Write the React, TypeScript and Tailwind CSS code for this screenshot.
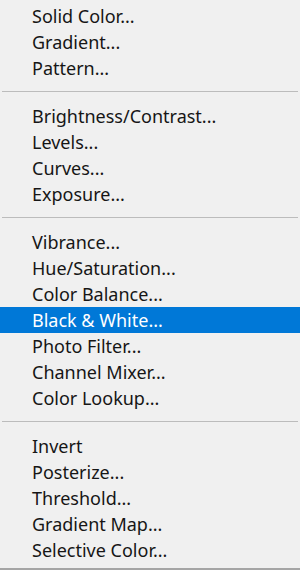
import React from "react";

const groups: string[][] = [
  ["Solid Color...", "Gradient...", "Pattern..."],
  ["Brightness/Contrast...", "Levels...", "Curves...", "Exposure..."],
  ["Vibrance...", "Hue/Saturation...", "Color Balance...", "Black & White...", "Photo Filter...", "Channel Mixer...", "Color Lookup..."],
  ["Invert", "Posterize...", "Threshold...", "Gradient Map...", "Selective Color..."],
];

export default function App() {
  return (
    <div
      className="w-[300px] h-[570px] bg-[#f0f0f0] flex flex-col pt-[3px] border-b-2 border-[#a5a5a5] overflow-hidden"
      style={{ fontFamily: '"Noto Sans", "Open Sans", sans-serif' }}
    >
      {groups.map((g, gi) => (
        <div key={gi} className="flex flex-col">
          {gi > 0 && (
            <div className="h-[22px] pt-[10px] px-[2px]">
              <div className="h-px w-full bg-[#bcbcbc]" />
            </div>
          )}
          {g.map((item) => {
            const sel = item === "Black & White...";
            return (
              <div
                key={item}
                className={
                  "h-[26px] flex items-center pl-[32px] text-[18px] leading-none " +
                  (sel ? "bg-[#0078d7] text-white" : "text-[#161616]")
                }
              >
                {item}
              </div>
            );
          })}
        </div>
      ))}
    </div>
  );
}
